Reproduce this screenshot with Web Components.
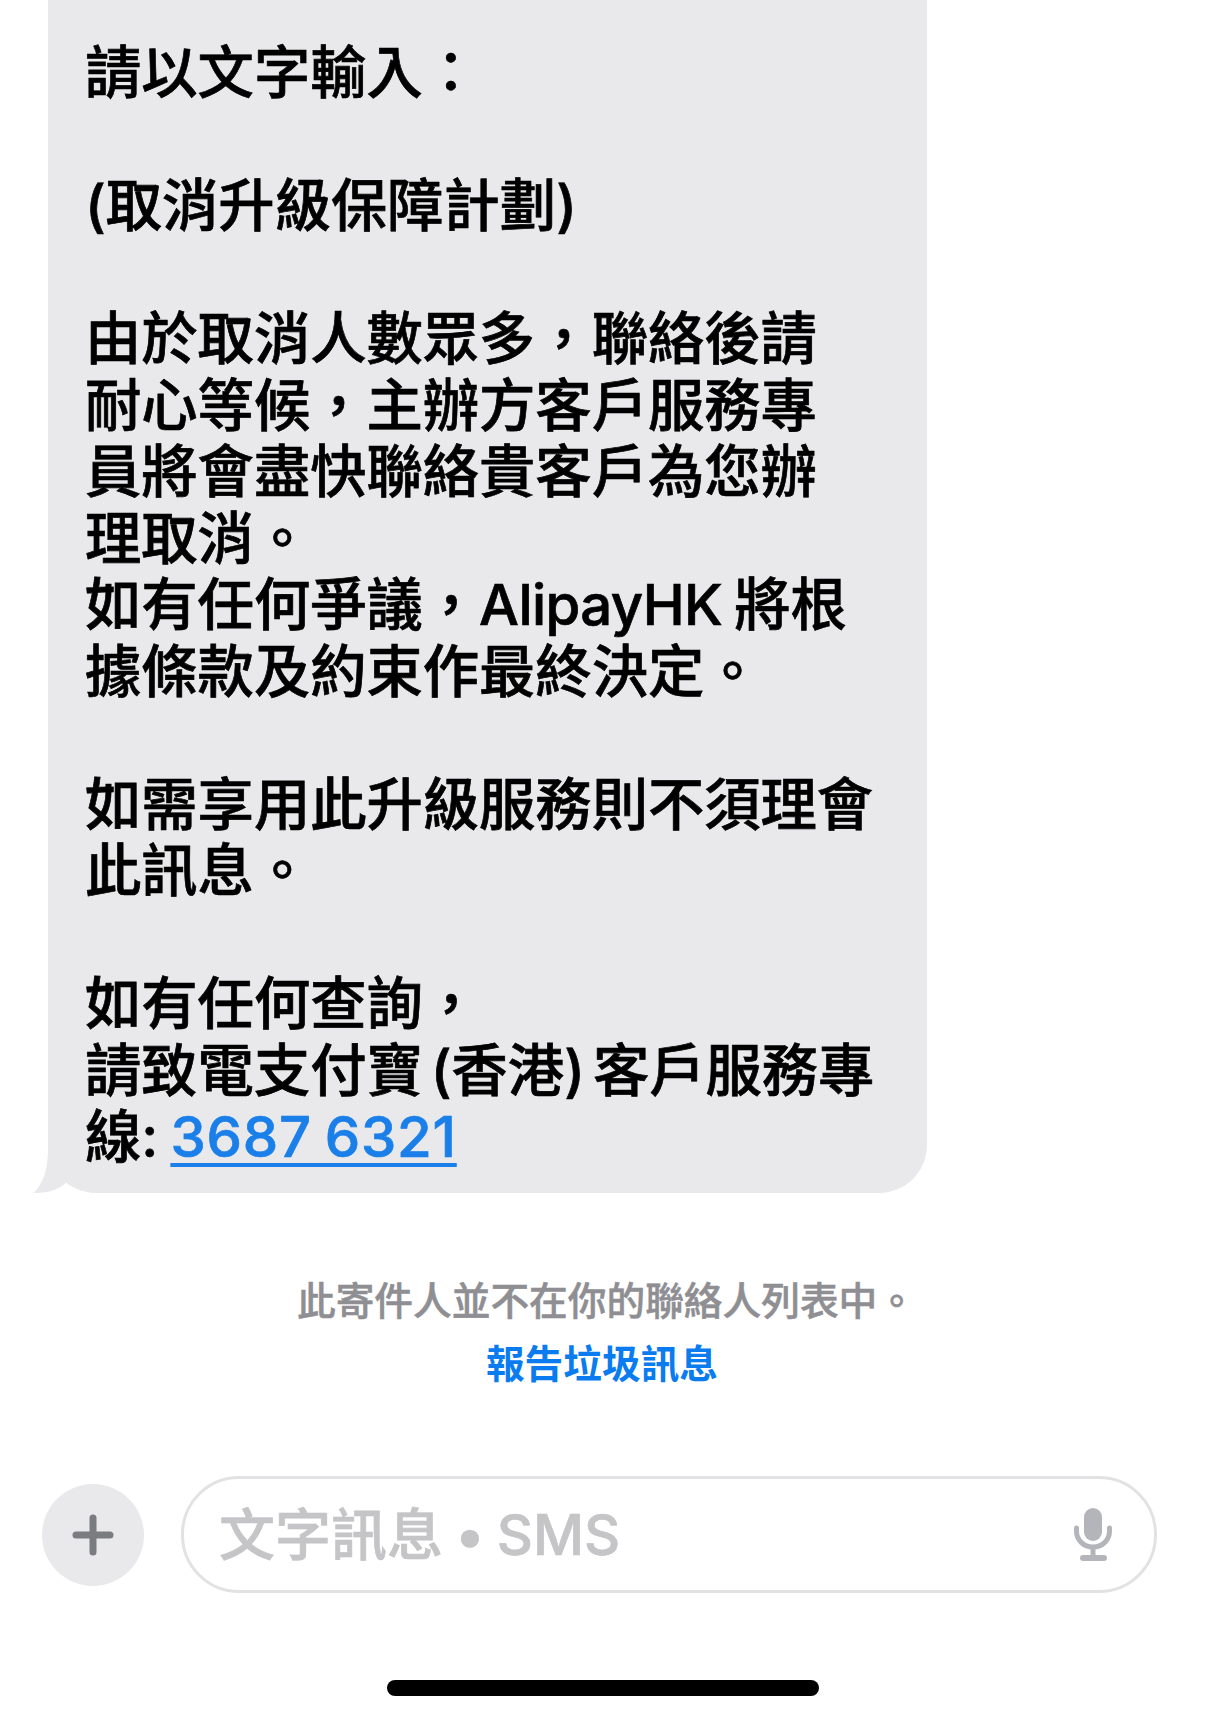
<!DOCTYPE html>
<html lang="zh-Hant">
<head>
<meta charset="utf-8">
<title>SMS</title>
<style>
html,body{margin:0;padding:0;background:#fff}
body{font-family:Inter,"Noto Sans CJK TC",sans-serif}
msg-bubble a{color:#1a7fe8;text-decoration:underline;text-decoration-thickness:4px;text-underline-offset:6px;letter-spacing:.8px}
</style>
</head>
<body>
<chat-screen>
  <msg-bubble>
    <p>請以文字輸入：</p>
    <p>&nbsp;</p>
    <p>(取消升級保障計劃)</p>
    <p>&nbsp;</p>
    <p>由於取消人數眾多，聯絡後請<br>耐心等候，主辦方客戶服務專<br>員將會盡快聯絡貴客戶為您辦<br>理取消。<br>如有任何爭議，<span style="letter-spacing:-.6px">AlipayHK</span> 將根<br>據條款及約束作最終決定。</p>
    <p>&nbsp;</p>
    <p>如需享用此升級服務則不須理會<br>此訊息。</p>
    <p>&nbsp;</p>
    <p>如有任何查詢，<br><span style="word-spacing:-7px">請致電支付寶 (香港) 客戶服務專</span><br>線: <a href="#">3687 6321</a></p>
  </msg-bubble>
  <sender-notice></sender-notice>
  <composer-bar></composer-bar>
  <home-indicator></home-indicator>
</chat-screen>
<script>
function def(name, html){
  customElements.define(name, class extends HTMLElement{
    constructor(){
      super();
      this.attachShadow({mode:'open'}).innerHTML = html;
    }
  });
}
def('chat-screen', `<style>
:host{display:flex;flex-direction:column;width:1206px;height:1720px;overflow:hidden;background:#fff;color:#000;
font-family:Inter,"Noto Sans CJK TC",sans-serif}
</style><slot></slot>`);

def('msg-bubble', `<style>
:host{display:block;position:relative;z-index:0;box-sizing:border-box;width:879px;margin-left:48px;height:1193px;
padding:40px 20px 0 37px;background:#e9e9eb;border-radius:0 0 48px 48px;
font-size:56.3px;line-height:66.5px;font-weight:500;white-space:nowrap;word-spacing:-3px;-webkit-text-stroke:.7px currentColor}
::slotted(p){margin:0}
svg{position:absolute;z-index:-1;left:-18px;bottom:0;display:block}
</style><slot></slot>
<svg width="70" height="44" viewBox="0 0 70 44" aria-hidden="true"><path d="M18 0C18 20 13 36 3 44C15 44 28 42 37 33C45 39 57 44 70 44L70 0Z" fill="#e9e9eb"/></svg>`);

def('sender-notice', `<style>
:host{display:flex;flex-direction:column;align-items:center;margin-top:77px;font-size:38.7px;line-height:63px;font-weight:500;color:#8e8e93;-webkit-text-stroke:.5px currentColor}
.a{margin-left:7px}
.b{color:#0a7cf0;font-weight:700;-webkit-text-stroke:0;margin-right:2px}
</style><div class="a">此寄件人並不在你的聯絡人列表中。</div><div class="b">報告垃圾訊息</div>`);

def('composer-bar', `<style>
:host{display:flex;align-items:center;gap:37px;margin-top:80px;padding:0 49px 0 42px}
.add{flex:none;width:102px;height:102px;border-radius:50%;background:#e9e9eb;display:flex;align-items:center;justify-content:center}
.add svg,.mic{display:block}
.field{flex:1;box-sizing:border-box;height:117px;border:3px solid #e2e2e4;border-radius:58px;display:flex;align-items:center;justify-content:space-between;padding:0 41px 0 35px;
font-size:56px;font-weight:500;color:#c5c5c7;white-space:nowrap;word-spacing:-3px}
.field span{padding-bottom:8px;-webkit-text-stroke:.7px currentColor}
</style>
<div class="add"><svg width="42" height="42" viewBox="0 0 42 42" aria-hidden="true"><path d="M21 4V38M4 21H38" stroke="#7b7c80" stroke-width="7" stroke-linecap="round" fill="none"/></svg></div>
<div class="field"><span>文字訊息 • SMS</span>
<svg class="mic" width="40" height="54" viewBox="0 0 40 54" aria-hidden="true"><rect x="11" y="0" width="18" height="33" rx="9" fill="#b3b5ba"/><path d="M3.500 20V23C3.500 32 10.500 39 20 39S36.500 32 36.500 23V20" fill="none" stroke="#b3b5ba" stroke-width="5" stroke-linecap="round"/><path d="M20 39V49" stroke="#b3b5ba" stroke-width="5"/><rect x="7" y="47" width="27" height="6" rx="3" fill="#b3b5ba"/></svg></div>`);

def('home-indicator', `<style>
:host{display:flex;justify-content:center;margin-top:87px}
div{width:432px;height:16px;border-radius:8px;background:#000}
</style><div></div>`);
</script>
</body>
</html>
